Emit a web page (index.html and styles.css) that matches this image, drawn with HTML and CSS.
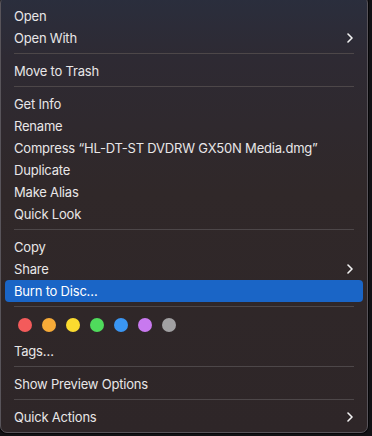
FILE: index.html
```html
<!DOCTYPE html>
<html>
<head>
  <meta charset="utf-8" />
  <meta name="viewport" content="width=device-width, initial-scale=1.0">
  <title>Context Menu</title>
  <link rel="stylesheet" href="styles.css">
</head>
<body>

  <div class="desktop">
    <ul class="menu">
      <li class="item">Open</li>
      <li class="item has-sub">Open With
        <svg class="chevron" viewBox="0 0 6 10"><path d="M1 1l4 4-4 4" /></svg>
      </li>
      <li class="sep"></li>
      <li class="item">Move to Trash</li>
      <li class="sep"></li>
      <li class="item">Get Info</li>
      <li class="item">Rename</li>
      <li class="item">Compress “HL-DT-ST DVDRW GX50N Media.dmg”</li>
      <li class="item">Duplicate</li>
      <li class="item">Make Alias</li>
      <li class="item">Quick Look</li>
      <li class="sep"></li>
      <li class="item">Copy</li>
      <li class="item has-sub">Share
        <svg class="chevron" viewBox="0 0 6 10"><path d="M1 1l4 4-4 4" /></svg>
      </li>
      <li class="item selected">Burn to Disc…</li>
      <li class="sep"></li>
      <li class="tags">
        <span class="dot red"></span>
        <span class="dot orange"></span>
        <span class="dot yellow"></span>
        <span class="dot green"></span>
        <span class="dot blue"></span>
        <span class="dot purple"></span>
        <span class="dot gray"></span>
      </li>
      <li class="item">Tags…</li>
      <li class="sep"></li>
      <li class="item">Show Preview Options</li>
      <li class="sep"></li>
      <li class="item has-sub">Quick Actions
        <svg class="chevron" viewBox="0 0 6 10"><path d="M1 1l4 4-4 4" /></svg>
      </li>
    </ul>
  </div>

</body>
</html>
```

FILE: styles.css
```css
/* --- General Setup --- */
:root {
  --text-color: #e8e6e7;
  --sep-color: #4d4749;
  --accent: #1a65c6;
}
*, *::before, *::after {
  box-sizing: border-box;
}
body {
  margin: 0;
  background: #121215;
  font-family: Inter, "Noto Sans", "Liberation Sans", sans-serif;
  font-size: 13px;
  color: var(--text-color);
  height: 436px;
  overflow: hidden;
}

.desktop {
  display: flex;
  align-items: flex-start;
}

/* --- Menu --- */
.menu {
  list-style: none;
  margin: -4px 0 0 0;
  padding: 8px 4px 4px;
  width: 368px;
  border: 1px solid #58545a;
  border-radius: 7px;
  background: linear-gradient(180deg, #2a2e3d 0%, #2e2a33 14%, #302829 45%, #2e2628 100%);
  box-shadow: 0 0 0 1px #060608;
}

.item {
  display: flex;
  align-items: center;
  justify-content: space-between;
  height: 22px;
  padding: 0 10px 0 9px;
  border-radius: 4px;
  letter-spacing: -0.2px;
  white-space: nowrap;
}
.item.selected {
  background: var(--accent);
  color: #fff;
}

.chevron {
  width: 6px;
  height: 10px;
  fill: none;
  stroke: #f2f2f2;
  stroke-width: 1.6;
  stroke-linecap: round;
  stroke-linejoin: round;
}

.sep {
  height: 11px;
  padding: 4px 9px 0;
}
.sep::before {
  content: "";
  display: block;
  height: 1px;
  background: var(--sep-color);
}

/* --- Tag dots --- */
.tags {
  display: flex;
  gap: 10px;
  padding: 5px 0 8px 13px;
}
.dot {
  width: 14px;
  height: 14px;
  border-radius: 50%;
}
.red { background: #f35b5b; }
.orange { background: #f7ab38; }
.yellow { background: #fbdb2f; }
.green { background: #4fdb5c; }
.blue { background: #3a96f3; }
.purple { background: #c879ef; }
.gray { background: #a1a0a2; }
```
